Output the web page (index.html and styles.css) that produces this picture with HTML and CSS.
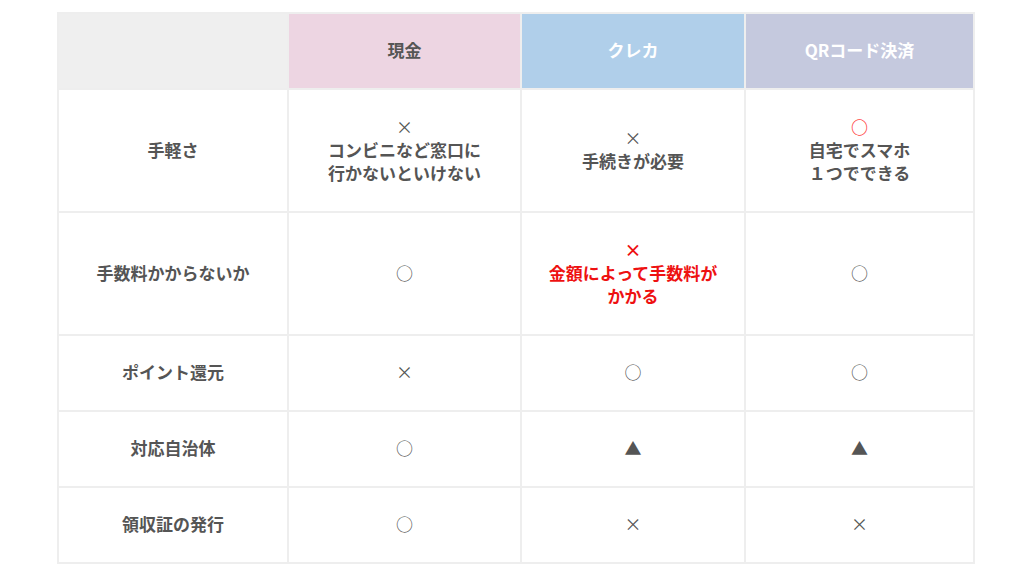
FILE: index.html
```html
<!DOCTYPE html>
<html lang="ja">
<head>
<meta charset="utf-8">
<link rel="stylesheet" href="styles.css">
</head>
<body>
<div class="page">
<table class="cmp">
  <colgroup>
    <col class="c-label">
    <col class="c-cash">
    <col class="c-card">
    <col class="c-qr">
  </colgroup>
  <thead>
    <tr class="head">
      <th class="h-blank"></th>
      <th class="h-cash">現金</th>
      <th class="h-card">クレカ</th>
      <th class="h-qr">QRコード決済</th>
    </tr>
  </thead>
  <tbody>
    <tr class="tall">
      <th>手軽さ</th>
      <td><span class="mk">×</span><br>コンビニなど窓口に<br>行かないといけない</td>
      <td><span class="mk">×</span><br>手続きが必要</td>
      <td><span class="mk red-soft">○</span><br>自宅でスマホ<br>１つでできる</td>
    </tr>
    <tr class="tall">
      <th>手数料かからないか</th>
      <td><span class="mk">○</span></td>
      <td class="red"><span class="mk">×</span><br>金額によって手数料が<br>かかる</td>
      <td><span class="mk">○</span></td>
    </tr>
    <tr class="short">
      <th>ポイント還元</th>
      <td><span class="mk">×</span></td>
      <td><span class="mk">○</span></td>
      <td><span class="mk">○</span></td>
    </tr>
    <tr class="short">
      <th>対応自治体</th>
      <td><span class="mk">○</span></td>
      <td><span class="mk">▲</span></td>
      <td><span class="mk">▲</span></td>
    </tr>
    <tr class="short">
      <th>領収証の発行</th>
      <td><span class="mk">○</span></td>
      <td><span class="mk">×</span></td>
      <td><span class="mk">×</span></td>
    </tr>
  </tbody>
</table>
</div>
</body>
</html>
```

FILE: styles.css
```css
html, body {
  margin: 0;
  padding: 0;
  background: #ffffff;
}

body {
  font-family: "Noto Sans CJK JP", "Noto Sans", sans-serif;
  color: #555555;
  font-size: 17px;
}

.page {
  padding: 12px 0 0 57px;
}

.cmp {
  border-collapse: collapse;
  table-layout: fixed;
  width: 916px;
}

.c-label { width: 230px; }
.c-cash { width: 233px; }
.c-card { width: 224px; }
.c-qr { width: 229px; }

.cmp th,
.cmp td {
  border: 2px solid #eeeeee;
  text-align: center;
  vertical-align: middle;
  font-weight: 700;
  line-height: 23px;
  padding: 0 2px 3px;
  color: #555555;
}

.head th {
  height: 71px;
}

.tall th, .tall td {
  height: 118px;
}

.short th, .short td {
  height: 71px;
}

.h-blank { background: #efefef; }
.h-cash { background: #edd5e2; color: #555555; }
.cmp .h-card { background: #b0cfea; color: #ffffff; }
.cmp .h-qr { background: #c5c9de; color: #ffffff; }

.mk {
  font-weight: 400;
  font-size: 17px;
}

.cmp td.red { color: #ee1111; }
.red .mk { color: #ee1111; font-weight: 700; }
.mk.red-soft { color: #ff4444; font-weight: 700; }
```
